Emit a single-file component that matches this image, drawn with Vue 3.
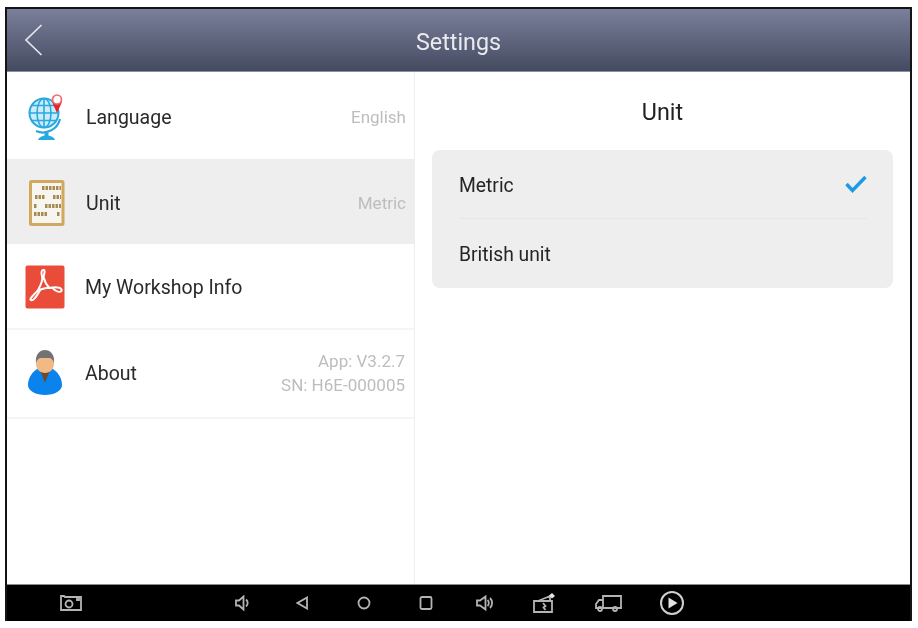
<script setup>
const rows = [
  { key: 'language', label: 'Language', value: ['English'] },
  { key: 'unit', label: 'Unit', value: ['Metric'], active: true },
  { key: 'workshop', label: 'My Workshop Info', value: [] },
  { key: 'about', label: 'About', value: ['App: V3.2.7', 'SN: H6E-000005'] },
]
const beads = [
  { y: 9, runs: [[15, 34]] },
  { y: 18, runs: [[8, 18], [26, 34]] },
  { y: 27, runs: [[7, 10], [18, 34]] },
  { y: 35, runs: [[7, 21], [30, 33]] },
]
</script>

<template>
  <div class="frame">
    <header class="topbar">
      <svg class="back" width="20" height="32" viewBox="0 0 20 32">
        <path d="M17.500 1 2 16 17.500 31" fill="none" stroke="#e4e6ea" stroke-width="1.700" />
      </svg>
      <h1>Settings</h1>
    </header>

    <main class="body">
      <section class="menu">
        <div
          v-for="row in rows"
          :key="row.key"
          class="row"
          :class="[row.key, { active: row.active }]"
        >
          <span class="icon">
            <svg v-if="row.key === 'language'" width="40" height="49" viewBox="0 0 40 49">
              <g fill="none" stroke="#2aa8e0">
                <circle cx="17" cy="21" r="14.500" fill="#cdecf9" stroke-width="2" />
                <ellipse cx="17" cy="21" rx="7" ry="14.500" stroke-width="1.600" />
                <path d="M17 6v30M3 21h28M5 13.500h24M5 28.500h24" stroke-width="1.600" />
                <path d="M33 27a17.500 17.500 0 0 1-24 12" stroke-width="2.200" />
              </g>
              <path d="M17.500 39h4v5h-4z" fill="#2aa8e0" />
              <path d="M11 48c1-3 4-4.500 8.500-4.500S27 45 28 48z" fill="#2aa8e0" />
              <path d="M30 21 25 10h10z" fill="#e5252e" />
              <circle cx="30" cy="7.500" r="4.500" fill="#fff" stroke="#f06a72" stroke-width="1.700" />
            </svg>
            <svg v-else-if="row.key === 'unit'" width="40" height="47" viewBox="0 0 40 47">
              <rect x="3.500" y="2.500" width="32.500" height="43" rx="1" fill="#f7f5f0" stroke="#d0a860" stroke-width="3" />
              <g v-for="line in beads" :key="line.y">
                <path
                  v-for="run in line.runs"
                  :key="run[0]"
                  :d="`M${run[0]} ${line.y}H${run[1]}`"
                  stroke="#a98a4e"
                  stroke-width="4"
                  stroke-dasharray="2.500 1"
                  fill="none"
                />
              </g>
            </svg>
            <svg v-else-if="row.key === 'workshop'" width="40" height="44" viewBox="0 0 40 44">
              <rect x="0.500" y="0.500" width="39" height="43" rx="2" fill="#ea4c3a" />
              <path
                d="M18 5c-1.500 0-2 3-1 6 1 4-1 9-4 14-2 3-7 7-7.500 9-.5 2 2.500 1.500 4-.5 3-3 4-6 6-9 4-1.500 8-2 12-1.500 3 3 7 5 9 3 1-1.500-1-3.500-4-3.500-3-.5-5 0-8 .5-3-3-5-7-6-11 1-3 1.500-7 .5-7z"
                fill="none"
                stroke="#fff"
                stroke-width="2"
                stroke-linejoin="round"
              />
            </svg>
            <svg v-else width="38" height="46" viewBox="0 0 38 46">
              <path d="M1 35C1 27 6 21 12 18h12c6 3 11 9 11 17 0 6-8 10-17 10S1 41 1 35z" fill="#0a84ec" />
              <path d="M13 20h10l-5 13z" fill="#6e4a2c" />
              <path d="M9 8h18v6c0 5-4 9-9 9s-9-4-9-9z" fill="#f2b985" />
              <path d="M9 13C8 4 13 0 18 0s10 4 9 13c-1-3-2-4-4-5H13c-2 1-3 2-4 5z" fill="#737373" />
            </svg>
          </span>
          <span class="label">{{ row.label }}</span>
          <span v-if="row.value.length" class="value">
            <span v-for="line in row.value" :key="line">{{ line }}</span>
          </span>
        </div>
      </section>

      <section class="detail">
        <h2>Unit</h2>
        <div class="options">
          <div class="option first">
            <span class="text">Metric</span>
            <svg class="check" width="22" height="18" viewBox="0 0 22 18">
              <path d="M1.500 9 7.500 15.500 20.500 2" fill="none" stroke="#1a9be6" stroke-width="3.400" />
            </svg>
          </div>
          <div class="option"><span class="text">British unit</span></div>
        </div>
      </section>
    </main>

    <footer class="sysbar">
      <svg class="s1" width="24" height="18" viewBox="0 0 24 18">
        <path d="M2 2h3l1 1h16v13H2zM18 3v3h2V3" />
        <circle cx="10" cy="10" r="3.500" />
      </svg>
      <svg class="s2" width="16" height="16" viewBox="0 0 16 16">
        <path d="M1 5.500h3L8.500 1.500v13L4 10.500H1zM11 4.500a4.500 4.500 0 0 1 0 7" />
      </svg>
      <svg class="s3" width="12" height="14" viewBox="0 0 12 14">
        <path d="M11 1.500v11L1.500 7z" />
      </svg>
      <svg class="s4" width="14" height="14" viewBox="0 0 14 14">
        <circle cx="7" cy="7" r="5.500" />
      </svg>
      <svg class="s5" width="14" height="14" viewBox="0 0 14 14">
        <rect x="1.500" y="1" width="11" height="12" rx="1.500" />
      </svg>
      <svg class="s6" width="18" height="16" viewBox="0 0 18 16">
        <path d="M1 5.500h3L9.500 1.500v13L4 10.500H1zM11.500 5a4 4 0 0 1 0 6M14 3a7 7 0 0 1 0 10" />
      </svg>
      <svg class="s7" width="24" height="20" viewBox="0 0 24 20">
        <path d="M2 8h18v11H2zM6 8l12-5v5M11 10l2.500 3-2 1.500 2 2.500" />
        <path class="solid" d="M17 2.500 20 0l3 3-3 2.500z" />
      </svg>
      <svg class="s8" width="28" height="18" viewBox="0 0 28 18">
        <path d="M9 2h18v12H9zM9 6H5L2 10v4h7" />
        <circle cx="6" cy="15" r="2" />
        <circle cx="21" cy="15" r="2" />
      </svg>
      <svg class="s9" width="24" height="24" viewBox="0 0 24 24">
        <circle cx="12" cy="12" r="11" />
        <path class="solid" d="M8.500 6.500v11l9-5.500z" />
      </svg>
    </footer>
  </div>
</template>

<style>
html, body { margin: 0; background: #fff; }
</style>

<style scoped>
.frame {
  box-sizing: border-box;
  width: 907px;
  height: 614px;
  margin: 7px 0 0 5px;
  border: 2px solid #141414;
  border-bottom: 0;
  display: flex;
  flex-direction: column;
  background: #fff;
  font-family: Roboto, "Liberation Sans", sans-serif;
  filter: blur(0.6px);
}
.topbar {
  flex: 0 0 63px;
  position: relative;
  display: flex;
  align-items: center;
  justify-content: center;
  background: linear-gradient(#7b7f9b, #434b60);
  border-bottom: 1px solid #8a90a0;
  box-sizing: border-box;
}
.back { position: absolute; left: 17px; top: 15px; }
h1 {
  margin: 0;
  padding-top: 3px;
  font-size: 23.300px;
  font-weight: 400;
  color: #e9ebef;
}
.body {
  flex: 1;
  min-height: 0;
  display: flex;
}
.menu {
  width: 407px;
  flex: none;
  border-right: 1px solid #eeeeee;
}
.row {
  display: flex;
  align-items: center;
  box-sizing: border-box;
  padding: 2px 8px 0 18px;
  border-bottom: 2px solid #f5f5f5;
}
.language { height: 87px; border-bottom: 0; }
.unit { height: 85px; border-bottom: 0; }
.workshop { height: 86px; padding-top: 0; }
.about { height: 89px; padding-top: 0; }
.active { background: #eeeeee; }
.icon {
  flex: 0 0 60px;
  display: flex;
  align-items: center;
}
.language .icon svg, .unit .icon svg { margin-left: 2px; }
.about .icon svg { margin: 0 0 2px 2px; }
.workshop .icon svg { margin-top: 2px; }
.label {
  padding-top: 2px;
  font-size: 19.500px;
  color: #2a2a2a;
  flex: 1;
}
.about .label { padding-top: 0; }
.language .label, .unit .label { margin-left: 1px; }
.value {
  display: flex;
  flex-direction: column;
  align-items: flex-end;
  gap: 4px;
  font-size: 17px;
  color: #bdbdbd;
}
.about .value { margin: 0 1px 2px 0; }
.detail {
  flex: 1;
  padding: 0 17px;
}
h2 {
  margin: 0;
  height: 78px;
  padding-top: 2px;
  box-sizing: border-box;
  display: flex;
  align-items: center;
  justify-content: center;
  font-size: 23.300px;
  font-weight: 400;
  color: #222;
}
.options {
  background: #eeeeee;
  border-radius: 8px;
  padding: 0 26px 0 27px;
  height: 138px;
}
.option {
  height: 69px;
  box-sizing: border-box;
  display: flex;
  align-items: center;
  justify-content: space-between;
  font-size: 19.300px;
  color: #252525;
}
.text { padding-top: 2px; }
.check { margin-bottom: 2px; }
.first { border-bottom: 1px solid #e6e6e6; padding-top: 1px; }
.sysbar {
  flex: 0 0 37px;
  display: flex;
  align-items: center;
  background: #000;
  border-top: 1px solid #8c8c8c;
  box-sizing: border-box;
}
.sysbar svg {
  flex: none;
  fill: none;
  stroke: #b4b4b4;
  stroke-width: 1.800;
}
.sysbar .solid { fill: #e4e4e4; stroke: none; }
.sysbar .s9 { stroke: #cfcfcf; stroke-width: 2; }
.s1 { margin-left: 52px; }
.s2 { margin-left: 152px; }
.s3 { margin-left: 45px; }
.s4 { margin-left: 49px; }
.s5 { margin-left: 48px; }
.s6 { margin-left: 43px; }
.s7 { margin-left: 38px; }
.s8 { margin-left: 38px; }
.s9 { margin-left: 38px; }
</style>
